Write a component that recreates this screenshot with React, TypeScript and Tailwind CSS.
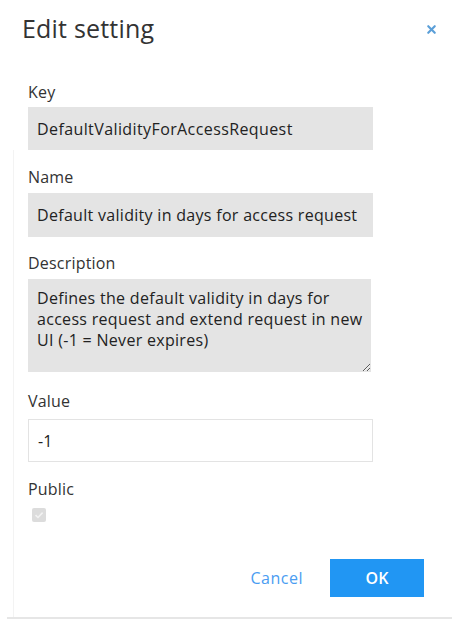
import { X } from "lucide-react";

const font = { fontFamily: "'Open Sans', 'Noto Sans', sans-serif" };

function Label({ children }: { children: string }) {
  return <div className="text-[16px] leading-[20px] tracking-[0.2px] text-[#333]">{children}</div>;
}

export default function App() {
  return (
    <div className="relative h-[626px] w-[452px] bg-white text-[#222]" style={font}>
      <div className="flex items-start justify-between pl-[22px] pr-[14px] pt-[12px]">
        <h1 className="text-[25px] leading-[32px] tracking-[0.2px] text-[#333]">Edit setting</h1>
        <button className="mt-[11px] text-[#5a9fd8]">
          <X size={13} strokeWidth={4} />
        </button>
      </div>

      <div className="mt-[38px] pl-[28px]">
        <Label>Key</Label>
        <div className="mt-[5px] flex h-[43px] w-[345px] items-center bg-[#e4e4e4] px-[9px] text-[16px] tracking-[0.4px]">
          DefaultValidityForAccessRequest
        </div>
      </div>

      <div className="ml-[13px] border-l border-[#f3f3f3] pb-[20px] pl-[14px]">
        <div className="pt-[17px]">
          <Label>Name</Label>
          <div className="mt-[6px] flex h-[44px] w-[345px] items-center bg-[#e4e4e4] px-[9px] text-[16px] tracking-[0.3px]">
            Default validity in days for access request
          </div>
        </div>

        <div className="pt-[16px]">
          <Label>Description</Label>
          <textarea
            readOnly
            wrap="off"
            className="mt-[6px] block h-[93px] w-[343px] resize-y overflow-hidden bg-[#e4e4e4] px-[9px] pt-[9px] text-[16px] leading-[21px] tracking-[0.3px] text-[#222] outline-none"
            defaultValue={"Defines the default validity in days for\naccess request and extend request in new\nUI (-1 = Never expires)"}
          />
        </div>

        <div className="pt-[19px]">
          <Label>Value</Label>
          <input
            className="mt-[8px] block h-[43px] w-[345px] border border-[#e3e3e3] px-[9px] text-[16px] text-[#222] outline-none"
            defaultValue="-1"
          />
        </div>

        <div className="pt-[17px]">
          <Label>Public</Label>
          <div className="ml-[4px] mt-[9px] flex h-[14px] w-[14px] items-center justify-center rounded-[2px] bg-[#dcdcdc]">
            <svg width="10" height="10" viewBox="0 0 10 10" fill="none">
              <path d="M1.5 5.2 4 7.5 8.6 2.6" stroke="#f2f2f2" strokeWidth="1.6" />
            </svg>
          </div>
        </div>

        <div className="mt-[37px] flex items-center justify-end gap-[27px] pr-[28px]">
          <button className="text-[16px] tracking-[0.5px] text-[#4a9df2]">Cancel</button>
          <button className="h-[38px] w-[94px] bg-[#2196f3] text-[16px] font-semibold text-white">OK</button>
        </div>
      </div>

      <div className="ml-[7px] h-[2px] bg-[#e6e6e6]" />
    </div>
  );
}
